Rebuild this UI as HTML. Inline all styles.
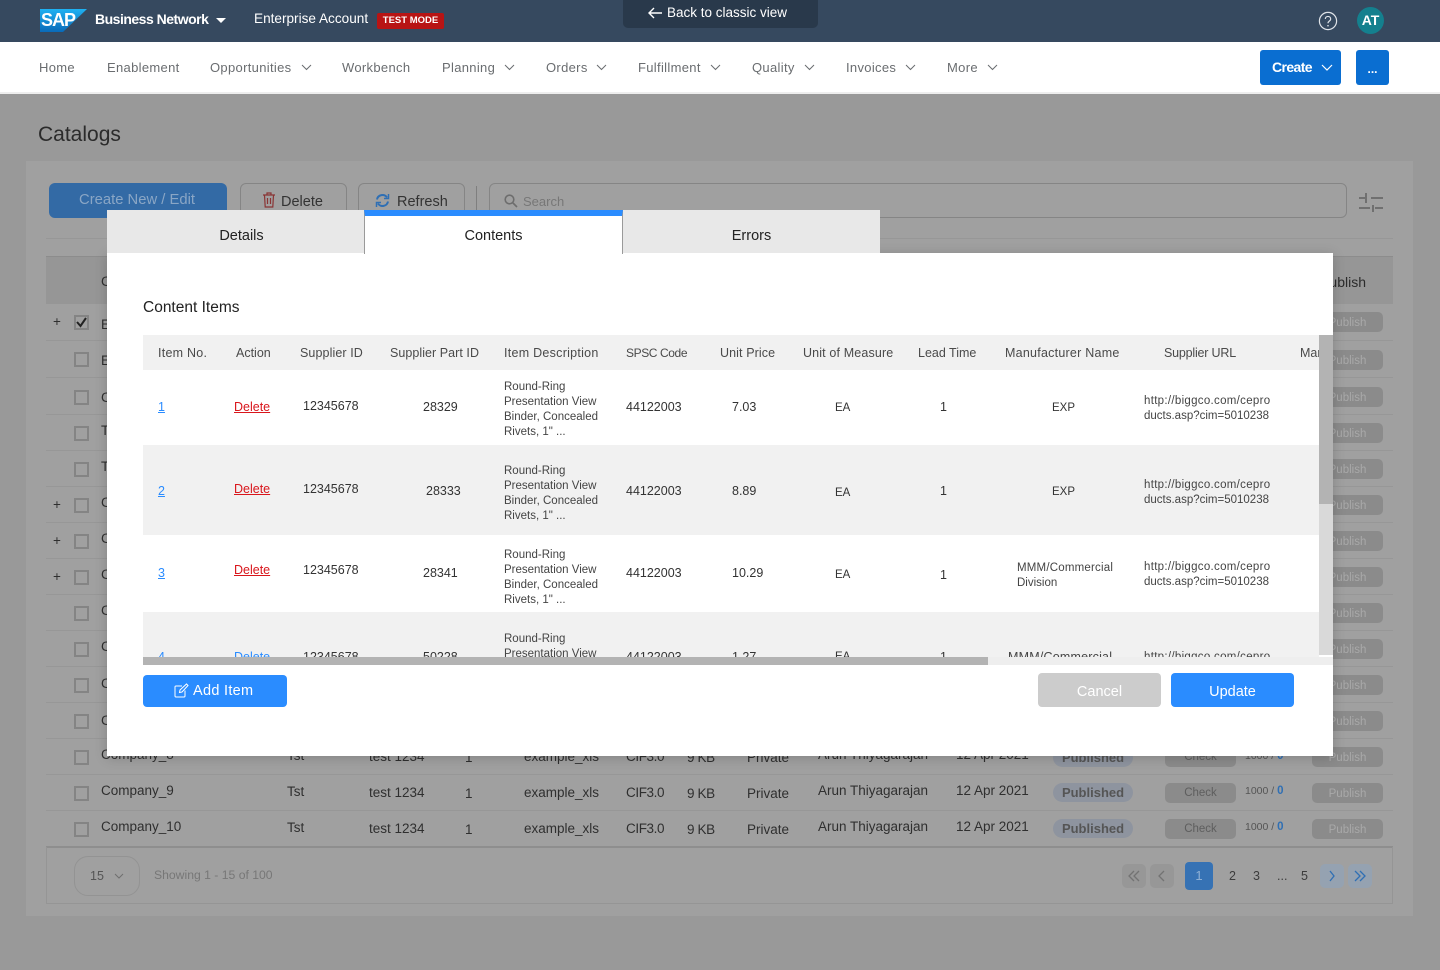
<!DOCTYPE html>
<html lang="en"><head><meta charset="utf-8"><title>Catalogs</title>
<style>
*{box-sizing:border-box}
html,body{margin:0;padding:0;width:1440px;height:970px;overflow:hidden;background:#999;font-family:"Liberation Sans",sans-serif}
.a{position:absolute}
.t{position:absolute;white-space:nowrap;line-height:16px;height:16px}
#page{position:relative;width:1440px;height:970px;overflow:hidden}
.nav{font-size:13px;color:#6a6d70;top:60px;letter-spacing:.32px}
.b{color:#2f2f2f;font-size:13.5px}
.cf{letter-spacing:-.4px}
.cb{position:absolute;left:74px;width:15px;height:15px;border:2px solid #848484;background:#a0a0a0}
.pub{position:absolute;left:1312px;width:71px;height:20px;border-radius:5px;background:#8b8b8b;color:#a9a9a9;font-size:11.5px;line-height:22px;text-align:center}
.sep{position:absolute;left:46px;width:1347px;height:1px;background:#979797}
.chk{position:absolute;left:1165px;width:71px;height:20px;border-radius:5px;background:#8b8b8b;color:#5e5e5e;font-size:11.5px;line-height:21px;text-align:center}
.pill{position:absolute;left:1053px;width:80px;height:19px;border-radius:10px;background:#8e949f;color:#555;font-size:13px;font-weight:bold;line-height:19px;text-align:center}
.th{font-size:12.5px;color:#4a4a4a;top:345px}
.td{font-size:12.5px;color:#333}
.ea{font-size:11.5px}
.exp{font-size:11.5px}
.d{font-size:11.5px;color:#444;line-height:15px;white-space:nowrap;position:absolute;left:504px}
.u{font-size:11.5px;color:#444;line-height:15px;white-space:nowrap;position:absolute;left:1144px}
.u span{letter-spacing:.3px}
.pg{position:absolute;top:864px;width:24px;height:24px;border-radius:5px;background:#979797}
</style></head><body><div id="page">

<!-- top bar -->
<div class="a" style="left:0;top:0;width:1440px;height:42px;background:#36495f"></div>
<svg class="a" style="left:40px;top:8px" width="48" height="24" viewBox="0 0 48 24"><defs><linearGradient id="g" x1="0" y1="0" x2="0" y2="1"><stop offset="0" stop-color="#1fb1f2"/><stop offset="1" stop-color="#0a6ab8"/></linearGradient></defs><polygon points="0,1 47,1 23,24 0,24" fill="url(#g)"/><text x="1" y="18" font-family="Liberation Sans" font-size="18" font-weight="bold" fill="#fff" letter-spacing="-1">SAP</text></svg>
<div class="t" style="left:95px;top:11px;color:#fff;font-size:14px;font-weight:bold;letter-spacing:-.5px">Business Network</div>
<div class="a" style="left:216px;top:18px;border:5px solid transparent;border-top:5px solid #fff;border-bottom:0"></div>
<div class="t" style="left:254px;top:11px;color:#fff;font-size:13.6px">Enterprise Account</div>
<div class="a" style="left:377px;top:13px;width:67px;height:16px;background:#b81414;border-radius:2px;color:#fff;font-size:9.5px;font-weight:bold;line-height:16px;text-align:center">TEST MODE</div>
<div class="a" style="left:623px;top:-4px;width:195px;height:32px;background:#29394b;border-radius:5px"></div>
<svg class="a" style="left:647px;top:6px" width="16" height="14" viewBox="0 0 16 14" fill="none" stroke="#fff" stroke-width="1.4"><path d="M15 7H2M7 2 2 7l5 5"/></svg>
<div class="t" style="left:667px;top:5px;color:#fff;font-size:13.5px">Back to classic view</div>
<svg class="a" style="left:1318px;top:11px" width="20" height="20" viewBox="0 0 20 20" fill="none" stroke="#dfe3e8" stroke-width="1.2"><circle cx="10" cy="10" r="8.6"/><path d="M7.3 8c0-3.4 5.4-3.4 5.4 0 0 2-2.7 2-2.7 4.2"/><path d="M10 14v1.4" stroke-width="1.4"/></svg>
<div class="a" style="left:1357px;top:7px;width:27px;height:27px;border-radius:50%;background:#14808e;color:#fff;font-size:14px;font-weight:bold;line-height:27px;text-align:center">AT</div>

<!-- nav -->
<div class="a" style="left:0;top:42px;width:1440px;height:52px;background:#fff;border-bottom:2px solid #eee"></div>
<div class="t nav" style="left:39px">Home</div>
<div class="t nav" style="left:107px">Enablement</div>
<div class="t nav" style="left:210px">Opportunities</div>
<div class="t nav" style="left:342px">Workbench</div>
<div class="t nav" style="left:442px">Planning</div>
<div class="t nav" style="left:546px">Orders</div>
<div class="t nav" style="left:638px">Fulfillment</div>
<div class="t nav" style="left:752px">Quality</div>
<div class="t nav" style="left:846px">Invoices</div>
<div class="t nav" style="left:947px">More</div>
<svg class="a" style="left:0;top:0" width="1440" height="94" fill="none" stroke="#6a6d70" stroke-width="1"><path d="M302 65l4.500 4.500 4.500-4.500M505 65l4.500 4.500 4.500-4.500M597 65l4.500 4.500 4.500-4.500M711 65l4.500 4.500 4.500-4.500M805 65l4.500 4.500 4.500-4.500M906 65l4.500 4.500 4.500-4.500M988 65l4.500 4.500 4.500-4.500"/></svg>
<div class="a" style="left:1260px;top:50px;width:81px;height:35px;background:#0a6ed1;border-radius:3px"></div>
<div class="t" style="left:1272px;top:59px;color:#fff;font-size:14px;font-weight:bold;letter-spacing:-.6px">Create</div>
<svg class="a" style="left:1321px;top:64px" width="12" height="8" fill="none" stroke="#fff" stroke-width="1.2"><path d="M1 1l5 5 5-5"/></svg>
<div class="a" style="left:1356px;top:50px;width:33px;height:35px;background:#0a6ed1;border-radius:3px;color:#fff;font-size:12px;font-weight:bold;line-height:39px;text-align:center">...</div>

<!-- background page -->
<div class="t" style="left:38px;top:123px;height:24px;line-height:24px;font-size:21px;color:#2b2b2b">Catalogs</div>
<div class="a" style="left:26px;top:161px;width:1387px;height:755px;background:#a0a0a0"></div>
<div class="a" style="left:49px;top:183px;width:178px;height:35px;background:#336aa5;border-radius:6px;color:#8aa6c5;font-size:14.8px;line-height:35px;padding-right:2px;text-align:center">Create New / Edit</div>
<div class="a" style="left:240px;top:183px;width:107px;height:35px;border:1px solid #858585;border-radius:6px"></div>
<svg class="a" style="left:262px;top:192px" width="14" height="16" viewBox="0 0 14 16" fill="none" stroke="#8a3434" stroke-width="1.2"><path d="M1 3h12M5 3V1h4v2M2.500 3l.7 12h7.600l.7-12M5.500 6v6M8.500 6v6"/></svg>
<div class="t" style="left:281px;top:194px;font-size:14.5px;color:#333">Delete</div>
<div class="a" style="left:358px;top:183px;width:107px;height:35px;border:1px solid #858585;border-radius:6px"></div>
<svg class="a" style="left:375px;top:193px" width="15" height="15" viewBox="0 0 15 15" fill="none" stroke="#2f6fb4" stroke-width="2"><path d="M2 6.500A5.500 5.500 0 0 1 12 4.500M13 8.500A5.500 5.500 0 0 1 3 10.500"/><path d="M13.500 1v4.500H9M1.500 14V9.500H6" stroke-width="1.500"/></svg>
<div class="t" style="left:397px;top:194px;font-size:14.5px;color:#333">Refresh</div>
<div class="a" style="left:476px;top:186px;width:1px;height:30px;background:#7f7f7f"></div>
<div class="a" style="left:489px;top:183px;width:858px;height:35px;border:1px solid #858585;border-radius:6px"></div>
<svg class="a" style="left:504px;top:194px" width="14" height="14" viewBox="0 0 14 14" fill="none" stroke="#6d6d6d" stroke-width="1.600"><circle cx="5.500" cy="5.500" r="4.300"/><path d="M9 9l4 4"/></svg>
<div class="t" style="left:523px;top:194px;font-size:13px;color:#777">Search</div>
<svg class="a" style="left:1358px;top:192px" width="26" height="22" fill="none" stroke="#707070" stroke-width="2"><path d="M1 6h8M13 6h12M8 1v10M1 16h11M17 16h8M15 13v7"/></svg>
<div class="sep" style="top:238px"></div>
<div class="a" style="left:46px;top:256px;width:1347px;height:48px;background:#969696;border-top:1px solid #8c8c8c"></div>
<div class="t b" style="left:101px;top:274px">C</div>
<div class="t" style="left:1332px;top:274px;font-size:14px;color:#2b2b2b;width:34px;overflow:hidden;direction:rtl">Publish</div>

<div class="sep" style="top:340px"></div><div class="sep" style="top:377px"></div><div class="sep" style="top:414px"></div><div class="sep" style="top:450px"></div><div class="sep" style="top:486px"></div><div class="sep" style="top:522px"></div><div class="sep" style="top:558px"></div><div class="sep" style="top:594px"></div><div class="sep" style="top:630px"></div><div class="sep" style="top:666px"></div><div class="sep" style="top:702px"></div><div class="sep" style="top:738px"></div><div class="sep" style="top:774px"></div><div class="sep" style="top:810px"></div>
<div class="a" style="left:46px;top:846px;width:1347px;height:2px;background:#8e8e8e"></div>
<div class="a" style="left:46px;top:903px;width:1347px;height:1px;background:#959595"></div>
<div class="a" style="left:46px;top:847px;width:1px;height:57px;background:#959595"></div>
<div class="a" style="left:1392px;top:847px;width:1px;height:57px;background:#959595"></div>

<div class="cb" style="top:315px"></div>
<svg class="a" style="left:76px;top:317px" width="11" height="11" fill="none" stroke="#222" stroke-width="2"><path d="M1 5l3.500 4L10 1"/></svg>
<div class="cb" style="top:352px"></div><div class="cb" style="top:390px"></div><div class="cb" style="top:426px"></div><div class="cb" style="top:462px"></div><div class="cb" style="top:498px"></div><div class="cb" style="top:534px"></div><div class="cb" style="top:570px"></div><div class="cb" style="top:606px"></div><div class="cb" style="top:642px"></div><div class="cb" style="top:678px"></div><div class="cb" style="top:714px"></div><div class="cb" style="top:750px"></div><div class="cb" style="top:786px"></div><div class="cb" style="top:822px"></div>

<div class="t b" style="left:53px;top:314px">+</div><div class="t b" style="left:53px;top:497px">+</div><div class="t b" style="left:53px;top:533px">+</div><div class="t b" style="left:53px;top:569px">+</div>
<div class="t b" style="left:101px;top:317px">E</div><div class="t b" style="left:101px;top:353px">E</div><div class="t b" style="left:101px;top:390px">C</div><div class="t b" style="left:101px;top:423px">T</div><div class="t b" style="left:101px;top:459px">T</div><div class="t b" style="left:101px;top:495px">C</div><div class="t b" style="left:101px;top:531px">C</div><div class="t b" style="left:101px;top:567px">C</div><div class="t b" style="left:101px;top:603px">C</div><div class="t b" style="left:101px;top:639px">C</div><div class="t b" style="left:101px;top:676px">C</div><div class="t b" style="left:101px;top:713px">C</div>

<div class="pub" style="top:312px">Publish</div><div class="pub" style="top:350px">Publish</div><div class="pub" style="top:387px">Publish</div><div class="pub" style="top:423px">Publish</div><div class="pub" style="top:459px">Publish</div><div class="pub" style="top:495px">Publish</div><div class="pub" style="top:531px">Publish</div><div class="pub" style="top:567px">Publish</div><div class="pub" style="top:603px">Publish</div><div class="pub" style="top:639px">Publish</div><div class="pub" style="top:675px">Publish</div><div class="pub" style="top:711px">Publish</div><div class="pub" style="top:747px">Publish</div><div class="pub" style="top:783px">Publish</div><div class="pub" style="top:819px">Publish</div>

<!-- rows 8, 9, 10 -->
<div class="t b" style="left:101px;top:747px">Company_8</div><div class="t b" style="left:287px;top:748px">Tst</div><div class="t b" style="left:369px;top:749px">test 1234</div><div class="t b" style="left:465px;top:750px">1</div><div class="t b" style="left:524px;top:749px">example_xls</div><div class="t b cf" style="left:626px;top:749px">CIF3.0</div><div class="t b cf" style="left:687px;top:750px">9 KB</div><div class="t b" style="left:747px;top:750px">Private</div><div class="t b" style="left:818px;top:747px">Arun Thiyagarajan</div><div class="t b" style="left:956px;top:747px">12 Apr 2021</div>
<div class="pill" style="top:748px">Published</div><div class="chk" style="top:747px">Check</div>
<div class="t" style="left:1245px;top:748px;font-size:10.500px;color:#555">1000 / <b style="color:#2f6fb4;font-size:11.500px">0</b></div>

<div class="t b" style="left:101px;top:783px">Company_9</div><div class="t b" style="left:287px;top:784px">Tst</div><div class="t b" style="left:369px;top:785px">test 1234</div><div class="t b" style="left:465px;top:786px">1</div><div class="t b" style="left:524px;top:785px">example_xls</div><div class="t b cf" style="left:626px;top:785px">CIF3.0</div><div class="t b cf" style="left:687px;top:786px">9 KB</div><div class="t b" style="left:747px;top:786px">Private</div><div class="t b" style="left:818px;top:783px">Arun Thiyagarajan</div><div class="t b" style="left:956px;top:783px">12 Apr 2021</div>
<div class="pill" style="top:783px">Published</div><div class="chk" style="top:783px">Check</div>
<div class="t" style="left:1245px;top:783px;font-size:10.500px;color:#555">1000 / <b style="color:#2f6fb4;font-size:11.500px">0</b></div>

<div class="t b" style="left:101px;top:819px">Company_10</div><div class="t b" style="left:287px;top:820px">Tst</div><div class="t b" style="left:369px;top:821px">test 1234</div><div class="t b" style="left:465px;top:822px">1</div><div class="t b" style="left:524px;top:821px">example_xls</div><div class="t b cf" style="left:626px;top:821px">CIF3.0</div><div class="t b cf" style="left:687px;top:822px">9 KB</div><div class="t b" style="left:747px;top:822px">Private</div><div class="t b" style="left:818px;top:819px">Arun Thiyagarajan</div><div class="t b" style="left:956px;top:819px">12 Apr 2021</div>
<div class="pill" style="top:819px">Published</div><div class="chk" style="top:819px">Check</div>
<div class="t" style="left:1245px;top:819px;font-size:10.500px;color:#555">1000 / <b style="color:#2f6fb4;font-size:11.500px">0</b></div>

<!-- pagination -->
<div class="a" style="left:74px;top:856px;width:66px;height:40px;border:1px solid #939393;border-radius:14px"></div>
<div class="t" style="left:90px;top:868px;font-size:12.500px;color:#555">15</div>
<svg class="a" style="left:114px;top:873px" width="10" height="7" fill="none" stroke="#6f6f6f"><path d="M1 1l4 4 4-4"/></svg>
<div class="t" style="left:154px;top:867px;font-size:12.200px;color:#777">Showing 1 - 15 of 100</div>
<div class="pg" style="left:1122px"></div><div class="pg" style="left:1150px"></div>
<div class="pg" style="left:1320px;background:#95a2b1"></div><div class="pg" style="left:1348px;background:#95a2b1"></div>
<div class="a" style="left:1185px;top:862px;width:28px;height:28px;border-radius:4px;background:#3672b4;color:#8fb0d4;font-size:13px;line-height:28px;text-align:center">1</div>
<div class="t" style="left:1229px;top:868px;font-size:12.500px;color:#3c3c3c">2</div><div class="t" style="left:1253px;top:868px;font-size:12.500px;color:#3c3c3c">3</div><div class="t" style="left:1277px;top:868px;font-size:12.500px;color:#3c3c3c">...</div><div class="t" style="left:1301px;top:868px;font-size:12.500px;color:#3c3c3c">5</div>
<svg class="a" style="left:0;top:860px" width="1440" height="32" fill="none" stroke-width="1.300"><path d="M1134 11l-5 5 5 5M1139 11l-5 5 5 5M1164 11l-5 5 5 5" stroke="#737373"/><path d="M1330 11l4 5-4 5M1355 11l5 5-5 5M1360 11l5 5-5 5" stroke="#2f6fb4"/></svg>

<!-- modal -->
<div class="a" style="left:107px;top:253px;width:1226px;height:503px;background:#fff;box-shadow:0 2px 12px rgba(0,0,0,.18)"></div>

<!-- modal tabs -->
<div class="a" style="left:107px;top:210px;width:257px;height:43px;background:#e8e8e8;color:#222;font-size:14.500px;line-height:52px;padding-left:12px;text-align:center">Details</div>
<div class="a" style="left:364px;top:210px;width:259px;height:44px;background:#fff;border-left:1px solid #9a9a9a;border-right:1px solid #9a9a9a;border-top:6px solid #2a8cff;color:#222;font-size:14.500px;line-height:40px;text-align:center">Contents</div>
<div class="a" style="left:623px;top:210px;width:257px;height:43px;background:#e8e8e8;color:#222;font-size:14.500px;line-height:52px;text-align:center">Errors</div>

<div class="t" style="left:143px;top:299px;height:18px;line-height:18px;font-size:15.500px;color:#222">Content Items</div>

<!-- table -->
<div class="a" style="left:143px;top:335px;width:1176px;height:322px;overflow:hidden">
  <div class="a" style="left:0;top:0;width:1176px;height:35px;background:#f1f1f1"></div>
  <div class="a" style="left:0;top:110px;width:1176px;height:90px;background:#f1f1f1"></div>
  <div class="a" style="left:0;top:277px;width:1176px;height:45px;background:#f1f1f1"></div>
  <div class="t" style="left:15px;top:314px;font-size:12.500px;color:#2a8cff;text-decoration:underline">4</div>
  <div class="t" style="left:91px;top:314px;font-size:12.500px;color:#2a8cff;text-decoration:underline">Delete</div>
  <div class="t" style="left:160px;top:314px;font-size:12.500px;color:#333">12345678</div>
  <div class="t" style="left:280px;top:314px;font-size:12.500px;color:#333">50228</div>
  <div class="d" style="left:361px;top:297px">Round-Ring<br>Presentation View</div>
  <div class="t" style="left:483px;top:314px;font-size:12.500px;color:#333">44122003</div>
  <div class="t" style="left:589px;top:314px;font-size:12.500px;color:#333">1.27</div>
  <div class="t" style="left:692px;top:314px;font-size:11.500px;color:#333">EA</div>
  <div class="t" style="left:797px;top:314px;font-size:12.500px;color:#333">1</div>
  <div class="t" style="left:865px;top:314px;font-size:12.500px;letter-spacing:.2px;color:#444">MMM/Commercial</div>
  <div class="t" style="left:1001px;top:314px;font-size:11.500px;letter-spacing:.3px;color:#444">http://biggco.com/cepro</div>
</div>

<div class="t th" style="left:158px;letter-spacing:.25px">Item No.</div>
<div class="t th" style="left:236px">Action</div>
<div class="t th" style="left:300px;letter-spacing:.1px">Supplier ID</div>
<div class="t th" style="left:390px;letter-spacing:.05px">Supplier Part ID</div>
<div class="t th" style="left:504px;letter-spacing:.27px">Item Description</div>
<div class="t th" style="left:626px;font-size:12px;letter-spacing:-.4px">SPSC Code</div>
<div class="t th" style="left:720px;letter-spacing:.1px">Unit Price</div>
<div class="t th" style="left:803px;letter-spacing:.14px">Unit of Measure</div>
<div class="t th" style="left:918px">Lead Time</div>
<div class="t th" style="left:1005px;letter-spacing:.24px">Manufacturer Name</div>
<div class="t th" style="left:1164px;letter-spacing:-.2px">Supplier URL</div>
<div class="t th" style="left:1300px;width:19px;overflow:hidden">Manufacturer</div>

<!-- row 1 -->
<div class="t td" style="left:158px;top:399px;color:#2a8cff;text-decoration:underline">1</div>
<div class="t td" style="left:234px;top:399px;color:#d9161c;text-decoration:underline">Delete</div>
<div class="t td" style="left:303px;top:398px">12345678</div>
<div class="t td" style="left:423px;top:399px">28329</div>
<div class="d" style="top:380px">Round-Ring<br>Presentation View<br>Binder, Concealed<br>Rivets, 1" ...</div>
<div class="t td" style="left:626px;top:399px">44122003</div>
<div class="t td" style="left:732px;top:399px">7.03</div>
<div class="t td ea" style="left:835px;top:400px">EA</div>
<div class="t td" style="left:940px;top:399px">1</div>
<div class="t td exp" style="left:1052px;top:400px">EXP</div>
<div class="u" style="top:394px"><span>http://biggco.com/cepro</span><br>ducts.asp?cim=5010238</div>

<!-- row 2 -->
<div class="t td" style="left:158px;top:483px;color:#2a8cff;text-decoration:underline">2</div>
<div class="t td" style="left:234px;top:481px;color:#d9161c;text-decoration:underline">Delete</div>
<div class="t td" style="left:303px;top:481px">12345678</div>
<div class="t td" style="left:426px;top:483px">28333</div>
<div class="d" style="top:464px">Round-Ring<br>Presentation View<br>Binder, Concealed<br>Rivets, 1" ...</div>
<div class="t td" style="left:626px;top:483px">44122003</div>
<div class="t td" style="left:732px;top:483px">8.89</div>
<div class="t td ea" style="left:835px;top:485px">EA</div>
<div class="t td" style="left:940px;top:483px">1</div>
<div class="t td exp" style="left:1052px;top:484px">EXP</div>
<div class="u" style="top:478px"><span>http://biggco.com/cepro</span><br>ducts.asp?cim=5010238</div>

<!-- row 3 -->
<div class="t td" style="left:158px;top:565px;color:#2a8cff;text-decoration:underline">3</div>
<div class="t td" style="left:234px;top:562px;color:#d9161c;text-decoration:underline">Delete</div>
<div class="t td" style="left:303px;top:562px">12345678</div>
<div class="t td" style="left:423px;top:565px">28341</div>
<div class="d" style="top:548px">Round-Ring<br>Presentation View<br>Binder, Concealed<br>Rivets, 1" ...</div>
<div class="t td" style="left:626px;top:565px">44122003</div>
<div class="t td" style="left:732px;top:565px">10.29</div>
<div class="t td ea" style="left:835px;top:567px">EA</div>
<div class="t td" style="left:940px;top:567px">1</div>
<div class="a" style="left:1017px;top:561px;font-size:11.500px;line-height:15px;color:#444;white-space:nowrap"><span style="letter-spacing:.2px">MMM/Commercial</span><br>Division</div>
<div class="u" style="top:560px"><span>http://biggco.com/cepro</span><br>ducts.asp?cim=5010238</div>

<!-- scrollbars -->
<div class="a" style="left:1319px;top:335px;width:14px;height:320px;background:#d9d9d9"></div>
<div class="a" style="left:1319px;top:335px;width:14px;height:169px;background:#b3b3b3"></div>
<div class="a" style="left:143px;top:657px;width:1190px;height:8px;background:#eee"></div>
<div class="a" style="left:143px;top:657px;width:845px;height:8px;background:#b3b3b3"></div>

<!-- buttons -->
<div class="a" style="left:143px;top:675px;width:144px;height:32px;background:#2a8cff;border-radius:4px"></div>
<svg class="a" style="left:174px;top:683px" width="15" height="15" viewBox="0 0 15 15" fill="none" stroke="#fff" stroke-width="1"><path d="M11 7.500V13a1 1 0 0 1-1 1H2a1 1 0 0 1-1-1V4a1 1 0 0 1 1-1h6"/><path d="M5.500 9.500 6 7l6.500-6L14 2.500 8 9z"/></svg>
<div class="t" style="left:193px;top:683px;color:#fff;font-size:14.500px;letter-spacing:.3px">Add Item</div>
<div class="a" style="left:1038px;top:673px;width:123px;height:34px;background:#ccc;border-radius:4px;color:#fff;font-size:14.500px;line-height:39px;text-align:center">Cancel</div>
<div class="a" style="left:1171px;top:673px;width:123px;height:34px;background:#2a8cff;border-radius:4px;color:#fff;font-size:14.500px;line-height:39px;text-align:center">Update</div>

</div></body></html>
